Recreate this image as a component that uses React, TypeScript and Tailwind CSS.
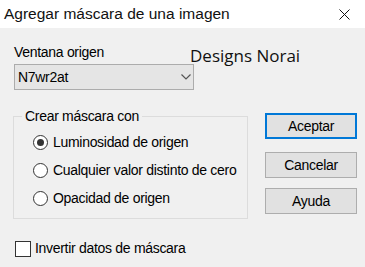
import React from 'react';

const options = ['Luminosidad de origen', 'Cualquier valor distinto de cero', 'Opacidad de origen'];

function Radio({ checked }: { checked?: boolean }) {
  return (
    <span className="flex h-[15px] w-[15px] shrink-0 items-center justify-center rounded-full border border-[#333333] bg-white">
      {checked && <span className="h-[7px] w-[7px] rounded-full bg-[#333333]" />}
    </span>
  );
}

function DialogButton({ label, primary }: { label: string; primary?: boolean }) {
  return (
    <button
      className={
        primary
          ? 'flex h-[26px] w-[92px] items-center justify-center border-2 border-[#0078d7] bg-[#e1e1e1] text-[14px] tracking-[-0.3px] text-black'
          : 'flex h-[26px] w-[92px] items-center justify-center border border-[#adadad] bg-[#e1e1e1] text-[14px] tracking-[-0.3px] text-black'
      }
    >
      {label}
    </button>
  );
}

export default function App() {
  return (
    <div className="flex h-[267px] w-[365px] flex-col overflow-hidden bg-[#f0f0f0] font-['Liberation_Sans',Arial,sans-serif] text-black">
      <header className="flex h-[28px] shrink-0 items-center justify-between bg-white pl-[4px] pr-[15px]">
        <span className="text-[15.5px] leading-[20px] text-[#111111]">Agregar máscara de una imagen</span>
        <svg width="11" height="11" viewBox="0 0 11 11" className="mt-[1px]">
          <path d="M0.5 0.5 L10.5 10.5 M10.5 0.5 L0.5 10.5" stroke="#111111" strokeWidth="1" fill="none" />
        </svg>
      </header>

      <main className="flex flex-col pl-[13px] pr-[8px] pt-[16px]">
        <div className="flex items-start">
          <div className="ml-[1px] flex w-[180px] shrink-0 flex-col">
            <span className="text-[14px] leading-[16px] tracking-[-0.3px]">Ventana origen</span>
            <div className="mt-[4px] flex h-[26px] items-center justify-between border border-[#acacac] bg-[#e5e5e5] pl-[3px] pr-[2px]">
              <span className="text-[14px] tracking-[-0.3px]">N7wr2at</span>
              <svg width="10" height="6" viewBox="0 0 10 6">
                <path d="M0.5 0.5 L5 5 L9.5 0.5" stroke="#555555" strokeWidth="1.2" fill="none" />
              </svg>
            </div>
          </div>
          <span className="ml-[-4px] mt-[2px] font-['Open_Sans',sans-serif] text-[17px] leading-[20px] text-[#111111]">
            Designs Norai
          </span>
        </div>

        <div className="mt-[18px] flex items-start">
          <fieldset className="m-0 h-[111px] w-[235px] shrink-0 border border-[#dcdcdc] pb-[6px] pl-[19px] pr-[4px] pt-[4px]">
            <legend className="ml-[-11px] px-[3px] text-[14px] leading-[16px] tracking-[-0.3px]">Crear máscara con</legend>
            {options.map((opt, i) => (
              <div key={opt} className="flex h-[28px] items-center gap-[5px]">
                <Radio checked={i === 0} />
                <span className="whitespace-nowrap text-[14px] tracking-[-0.3px]">{opt}</span>
              </div>
            ))}
          </fieldset>
          <div className="ml-[17px] mt-[5px] flex shrink-0 flex-col">
            <DialogButton label="Aceptar" primary />
            <div className="mt-[13px]">
              <DialogButton label="Cancelar" />
            </div>
            <div className="mt-[10px]">
              <DialogButton label="Ayuda" />
            </div>
          </div>
        </div>

        <label className="ml-[2px] mt-[19px] flex items-center gap-[4px]">
          <span className="h-[16px] w-[16px] border border-[#333333] bg-white" />
          <span className="text-[14px] tracking-[-0.3px]">Invertir datos de máscara</span>
        </label>
      </main>
    </div>
  );
}
